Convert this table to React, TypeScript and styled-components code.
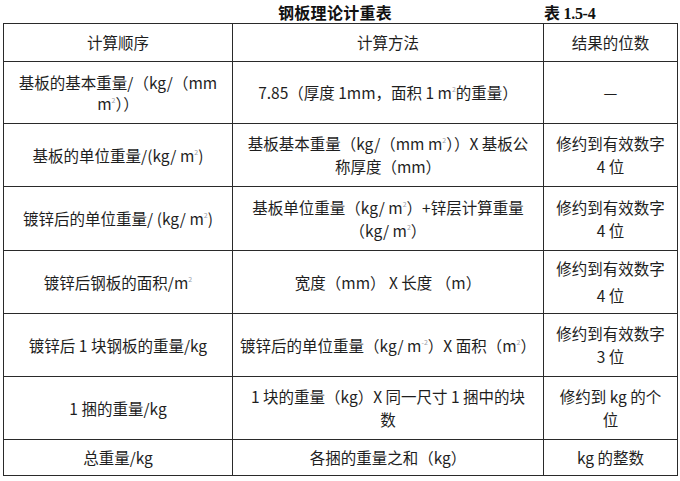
import React from "react";
import styled, { createGlobalStyle } from "styled-components";

const Global = createGlobalStyle`
  html, body { margin: 0; padding: 0; background: #ffffff; }
  body { font-family: "Noto Sans CJK SC", "Noto Sans", sans-serif; color: #1c1c1c; }
`;

const Page = styled.div`
  width: 680px;
  height: 481px;
  padding: 0 3px;
  box-sizing: border-box;
  background: #fff;
`;

const TitleBar = styled.div`
  height: 23px;
  display: flex;
  align-items: center;
  padding-left: 275px;
  gap: 152px;
  font-weight: 700;
  font-size: 16px;
  color: #111;
`;

const Title = styled.span`
  font-family: "Noto Sans CJK SC", sans-serif;
  font-weight: 700;
  letter-spacing: 0.3px;
`;

const Tag = styled.span`
  font-family: "Liberation Serif", "Noto Sans CJK SC", serif;
  font-weight: 700;
  font-size: 16px;
  letter-spacing: -0.3px;
`;

const Sheet = styled.table`
  border-collapse: collapse;
  table-layout: fixed;
  width: 674px;
`;

const Row = styled.tr<{ $h: number }>`
  height: ${(p) => p.$h}px;
`;

const Cell = styled.td<{ $lh?: number }>`
  border: 1.5px solid #2a2a2a;
  padding: 0 4px;
  text-align: center;
  vertical-align: middle;
  font-size: 15.5px;
  line-height: ${(p) => p.$lh ?? 23}px;
  color: #1e1e1e;
  white-space: nowrap;
  overflow: hidden;
`;

const HeadCell = styled(Cell).attrs({ as: "th" })`
  font-weight: 400;
`;

const Sup = styled.sup`
  font-size: 7px;
  line-height: 0;
  color: #9aa0aa;
  vertical-align: 7px;
`;

const M2 = () => (
  <>
    m<Sup>2</Sup>
  </>
);

type RowData = { h: number; lh?: number; a: React.ReactNode; b: React.ReactNode; c: React.ReactNode };

const rows: RowData[] = [
  {
    h: 62,
    lh: 21,
    a: (
      <>
        基板的基本重量/（kg/（mm
        <br />
        <M2 />））
      </>
    ),
    b: (
      <>
        7.85（厚度 1mm，面积 1 <M2 />的重量）
      </>
    ),
    c: "—",
  },
  {
    h: 63,
    a: (
      <>
        基板的单位重量/(kg/ <M2 />)
      </>
    ),
    b: (
      <>
        基板基本重量（kg/（mm <M2 />））X 基板公
        <br />
        称厚度（mm）
      </>
    ),
    c: (
      <>
        修约到有效数字
        <br />4 位
      </>
    ),
  },
  {
    h: 64,
    a: (
      <>
        镀锌后的单位重量/ (kg/ <M2 />)
      </>
    ),
    b: (
      <>
        基板单位重量（kg/ <M2 />）+锌层计算重量
        <br />
        （kg/ <M2 />）
      </>
    ),
    c: (
      <>
        修约到有效数字
        <br />4 位
      </>
    ),
  },
  {
    h: 63,
    lh: 27,
    a: (
      <>
        镀锌后钢板的面积/<M2 />
      </>
    ),
    b: "宽度（mm） X 长度 （m）",
    c: (
      <>
        修约到有效数字
        <br />4 位
      </>
    ),
  },
  {
    h: 63,
    a: "镀锌后 1 块钢板的重量/kg",
    b: (
      <>
        镀锌后的单位重量（kg/ m<Sup>-2</Sup>）X 面积（<M2 />）
      </>
    ),
    c: (
      <>
        修约到有效数字
        <br />3 位
      </>
    ),
  },
  {
    h: 63,
    a: "1 捆的重量/kg",
    b: (
      <>
        1 块的重量（kg）X 同一尺寸 1 捆中的块
        <br />数
      </>
    ),
    c: (
      <>
        修约到 kg 的个
        <br />位
      </>
    ),
  },
  {
    h: 36,
    a: "总重量/kg",
    b: "各捆的重量之和（kg）",
    c: "kg 的整数",
  },
];

export default function App() {
  return (
    <Page>
      <Global />
      <TitleBar>
        <Title>钢板理论计重表</Title>
        <Tag>表 1.5-4</Tag>
      </TitleBar>
      <Sheet>
        <colgroup>
          <col style={{ width: 229 }} />
          <col style={{ width: 311 }} />
          <col style={{ width: 134 }} />
        </colgroup>
        <thead>
          <Row $h={38}>
            <HeadCell>计算顺序</HeadCell>
            <HeadCell>计算方法</HeadCell>
            <HeadCell>结果的位数</HeadCell>
          </Row>
        </thead>
        <tbody>
          {rows.map((r, i) => (
            <Row key={i} $h={r.h}>
              <Cell $lh={r.lh}>{r.a}</Cell>
              <Cell $lh={r.lh}>{r.b}</Cell>
              <Cell $lh={r.lh}>{r.c}</Cell>
            </Row>
          ))}
        </tbody>
      </Sheet>
    </Page>
  );
}
